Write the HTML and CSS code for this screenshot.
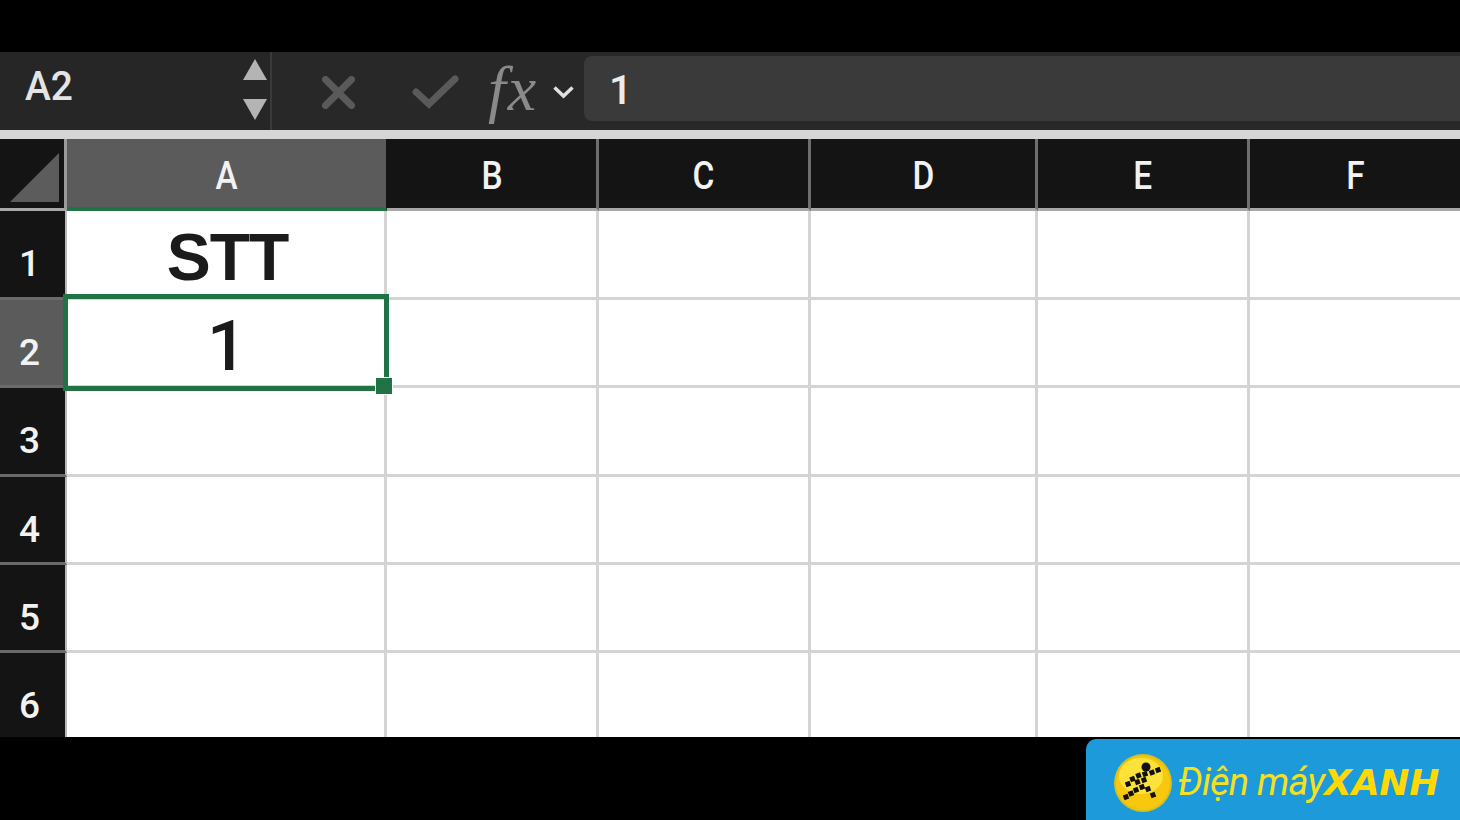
FILE: index.html
```html
<!DOCTYPE html>
<html lang="en">
<head>
  <meta charset="UTF-8" />
  <title>Excel - STT</title>
  <link rel="stylesheet" href="styles.css">
</head>
<body>

  <div class="top-gap"></div>

  <div class="formula-bar">
    <div class="name-box">
      <span class="name-value">A2</span>
      <div class="stepper">
        <svg width="24" height="21" viewBox="0 0 24 21"><path d="M12 0 L24 21 L0 21 Z" fill="#b4b4b4"/></svg>
        <svg width="24" height="21" viewBox="0 0 24 21"><path d="M0 0 L24 0 L12 21 Z" fill="#b4b4b4"/></svg>
      </div>
    </div>
    <div class="formula-tools">
      <svg class="tool-cancel" width="33" height="33" viewBox="0 0 33 33"><path d="M3.5 3.5 L29.5 29.5 M29.5 3.5 L3.5 29.5" stroke="#5a5a5a" stroke-width="7" stroke-linecap="round" fill="none"/></svg>
      <svg class="tool-ok" width="47" height="34" viewBox="0 0 47 34"><path d="M4 17 L17 29 L43 4" stroke="#5a5a5a" stroke-width="7" stroke-linecap="round" fill="none"/></svg>
      <span class="fx">fx</span>
      <svg class="fx-arrow" width="23" height="14" viewBox="0 0 23 14"><path d="M2.5 2.5 L11.5 11 L20.5 2.5" stroke="#e0e0e0" stroke-width="3.5" fill="none"/></svg>
    </div>
    <div class="formula-input">1</div>
  </div>

  <div class="bar-line"></div>

  <div class="sheet">
    <div class="corner">
      <svg width="49" height="49" viewBox="0 0 49 49"><path d="M49 0 L49 49 L0 49 Z" fill="#5c5c5c"/></svg>
    </div>
    <div class="col-head active"><span>A</span></div>
    <div class="col-head"><span>B</span></div>
    <div class="col-head"><span>C</span></div>
    <div class="col-head"><span>D</span></div>
    <div class="col-head"><span>E</span></div>
    <div class="col-head last"><span>F</span></div>

    <div class="row-head">1</div>
    <div class="cell title">STT</div>
    <div class="cell"></div><div class="cell"></div><div class="cell"></div><div class="cell"></div><div class="cell last"></div>

    <div class="row-head active">2</div>
    <div class="cell value">1</div>
    <div class="cell"></div><div class="cell"></div><div class="cell"></div><div class="cell"></div><div class="cell last"></div>

    <div class="row-head">3</div>
    <div class="cell"></div><div class="cell"></div><div class="cell"></div><div class="cell"></div><div class="cell"></div><div class="cell last"></div>

    <div class="row-head">4</div>
    <div class="cell"></div><div class="cell"></div><div class="cell"></div><div class="cell"></div><div class="cell"></div><div class="cell last"></div>

    <div class="row-head">5</div>
    <div class="cell"></div><div class="cell"></div><div class="cell"></div><div class="cell"></div><div class="cell"></div><div class="cell last"></div>

    <div class="row-head end">6</div>
    <div class="cell end"></div><div class="cell end"></div><div class="cell end"></div><div class="cell end"></div><div class="cell end"></div><div class="cell end last"></div>

    <div class="selection"><span class="fill-handle"></span></div>
  </div>

  <div class="bottom-bar">
    <div class="brand">
      <svg class="brand-mark" width="58" height="58" viewBox="0 0 58 58">
        <defs><rect id="px" x="-2.5" y="-2.5" width="5" height="5" transform="rotate(-20)"/></defs>
        <circle cx="29" cy="29" r="29" fill="#d9c01c"/>
        <circle cx="29" cy="29" r="27" fill="#f8c80e"/>
        <ellipse cx="27" cy="22" rx="22" ry="18" fill="#fde23a"/>
        <circle cx="32" cy="13" r="4.5" fill="#111"/>
        <g fill="#111">
          <use href="#px" x="44" y="16"/><use href="#px" x="38" y="18.5"/>
          <use href="#px" x="31" y="20"/><use href="#px" x="24.5" y="21.5"/>
          <use href="#px" x="30" y="26"/><use href="#px" x="18.5" y="25"/><use href="#px" x="14" y="30"/>
          <use href="#px" x="23.5" y="28"/>
          <use href="#px" x="28" y="33"/>
          <use href="#px" x="22" y="36"/><use href="#px" x="17" y="39.5"/><use href="#px" x="12" y="43"/>
          <use href="#px" x="34" y="35"/><use href="#px" x="39" y="41"/>
        </g>
      </svg>
      <span class="brand-name">Điện máy<b>XANH</b></span>
    </div>
  </div>

</body>
</html>
```

FILE: styles.css
```css
* {
  box-sizing: border-box;
  margin: 0;
  padding: 0;
}

body {
  width: 1460px;
  height: 820px;
  overflow: hidden;
  background-color: #000;
  font-family: Roboto, sans-serif;
  display: flex;
  flex-direction: column;
}

.top-gap {
  height: 52px;
}

/* formula bar */
.formula-bar {
  height: 78px;
  background-color: #282828;
  display: flex;
}

.name-box {
  width: 272px;
  padding: 0 3px 0 25px;
  display: flex;
  align-items: center;
  justify-content: space-between;
  border-right: 2px solid #3a3a3a;
  background-color: #262626;
}

.name-value {
  font-size: 41px;
  font-weight: 500;
  color: #e4e4e4;
  margin-bottom: 11px;
  transform: scaleX(0.95);
  transform-origin: left center;
}

.stepper {
  display: flex;
  flex-direction: column;
  gap: 19px;
  margin-bottom: 4px;
}

.stepper svg {
  display: block;
}

.formula-tools {
  width: 312px;
  display: flex;
  align-items: center;
  padding: 2px 0 0 50px;
}

.tool-ok {
  margin-left: 57px;
}

.fx {
  font-family: 'Liberation Serif', serif;
  font-style: italic;
  font-size: 64px;
  line-height: 64px;
  letter-spacing: 2px;
  color: #8a8a8a;
  margin-left: 29px;
  margin-bottom: 6px;
}

.fx-arrow {
  margin-left: 14px;
}

.formula-input {
  flex: 1;
  height: 65px;
  margin-top: 4px;
  padding-left: 25px;
  background-color: #3a3a3a;
  border-radius: 8px 0 0 8px;
  color: #ececec;
  font-size: 41px;
  font-weight: 500;
  line-height: 69px;
}

.bar-line {
  height: 9px;
  background-color: #d6d6d6;
}

/* sheet grid */
.sheet {
  position: relative;
  height: 598px;
  display: grid;
  grid-template-columns: 67px 320px 212px 212px 227px 212px 210px;
  grid-template-rows: 72px 89px 88px 89px 88px 88px 84px;
  background-color: #fff;
}

.corner {
  background-color: #141414;
  border-right: 3px solid #9a9a9a;
  border-bottom: 3px solid #a8a8a8;
  padding: 14px 0 0 10px;
}

.corner svg {
  display: block;
}

.col-head {
  background-color: #141414;
  color: #f2f2f2;
  font-size: 38px;
  font-weight: 500;
  line-height: 75px;
  text-align: center;
  border-right: 3px solid #6e6e6e;
  border-bottom: 3px solid #a8a8a8;
}

.col-head span {
  display: inline-block;
  transform: scaleX(0.88);
}

.col-head.active {
  background-color: #5b5b5b;
  border-right: 1px solid #141414;
  border-bottom: 4px solid #217346;
}

.col-head.last {
  border-right: none;
}

.row-head {
  background-color: #141414;
  color: #f2f2f2;
  font-size: 37px;
  font-weight: 500;
  text-align: center;
  padding: 31px 6px 0 0;
  border-right: 2px solid #b8b8b8;
  border-bottom: 3px solid #6a6a6a;
}

.row-head.active {
  background-color: #5b5b5b;
}

.row-head.end {
  border-bottom: none;
}

.cell {
  border-right: 3px solid #d4d4d4;
  border-bottom: 3px solid #d4d4d4;
  text-align: center;
  color: #1b1b1b;
}

.cell.last {
  border-right: none;
}

.cell.end {
  border-bottom: none;
}

.cell.title {
  font-family: 'Liberation Sans', sans-serif;
  font-size: 66px;
  font-weight: bold;
  letter-spacing: -1px;
  line-height: 92px;
  padding-left: 4px;
}

.cell.value {
  font-size: 70px;
  font-weight: 500;
  line-height: 92px;
  padding-left: 3px;
}

/* selected cell outline */
.selection {
  position: absolute;
  left: 63px;
  top: 155px;
  width: 326px;
  height: 97px;
  border: 5px solid #217346;
}

.fill-handle {
  position: absolute;
  right: -9px;
  bottom: -9px;
  width: 18px;
  height: 18px;
  background-color: #217346;
  border: 1px solid #fff;
}

/* logo strip */
.bottom-bar {
  flex: 1;
  display: flex;
  justify-content: flex-end;
  padding-top: 2px;
}

.brand {
  width: 374px;
  background-color: #1c9ad9;
  border-radius: 10px 0 0 0;
  display: flex;
  align-items: flex-start;
  padding: 15px 0 0 28px;
}

.brand-name {
  font-style: italic;
  font-size: 38px;
  letter-spacing: -0.8px;
  color: #f5e020;
  margin: 6px 0 0 6px;
  white-space: nowrap;
}

.brand-name b {
  font-family: 'DejaVu Sans', sans-serif;
  font-weight: bold;
  font-size: 36px;
  letter-spacing: -0.2px;
  color: #ffd800;
}
```
